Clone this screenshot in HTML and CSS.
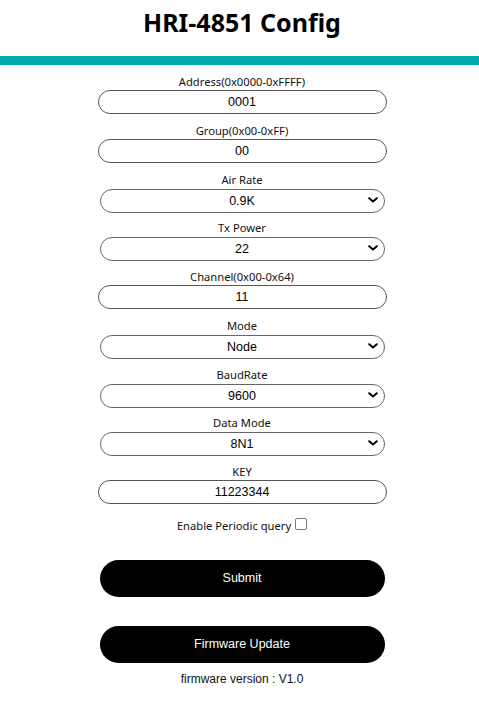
FILE: index.html
```html
<!DOCTYPE html>
<html>
<head>
<meta charset="utf-8">
<title>HRI-4851 Config</title>
<link rel="stylesheet" href="styles.css">
</head>
<body>
<header class="head">
  <h1 class="title">HRI-4851 Config</h1>
</header>
<div class="bar"></div>
<form class="form">
  <div class="field">
    <label class="label">Address(0x0000-0xFFFF)</label>
    <input class="text" type="text" value="0001">
  </div>
  <div class="field">
    <label class="label">Group(0x00-0xFF)</label>
    <input class="text" type="text" value="00">
  </div>
  <div class="field">
    <label class="label">Air Rate</label>
    <div class="selwrap">
      <select class="sel"><option>0.9K</option></select>
      <svg class="chev" width="10" height="6" viewBox="0 0 10 6"><path d="M1.2 1.2 L5 4.5 L8.8 1.2" fill="none" stroke="#000" stroke-width="2" stroke-linecap="round" stroke-linejoin="round"/></svg>
    </div>
  </div>
  <div class="field">
    <label class="label">Tx Power</label>
    <div class="selwrap">
      <select class="sel"><option>22</option></select>
      <svg class="chev" width="10" height="6" viewBox="0 0 10 6"><path d="M1.2 1.2 L5 4.5 L8.8 1.2" fill="none" stroke="#000" stroke-width="2" stroke-linecap="round" stroke-linejoin="round"/></svg>
    </div>
  </div>
  <div class="field">
    <label class="label">Channel(0x00-0x64)</label>
    <input class="text" type="text" value="11">
  </div>
  <div class="field">
    <label class="label">Mode</label>
    <div class="selwrap">
      <select class="sel"><option>Node</option></select>
      <svg class="chev" width="10" height="6" viewBox="0 0 10 6"><path d="M1.2 1.2 L5 4.5 L8.8 1.2" fill="none" stroke="#000" stroke-width="2" stroke-linecap="round" stroke-linejoin="round"/></svg>
    </div>
  </div>
  <div class="field">
    <label class="label">BaudRate</label>
    <div class="selwrap">
      <select class="sel"><option>9600</option></select>
      <svg class="chev" width="10" height="6" viewBox="0 0 10 6"><path d="M1.2 1.2 L5 4.5 L8.8 1.2" fill="none" stroke="#000" stroke-width="2" stroke-linecap="round" stroke-linejoin="round"/></svg>
    </div>
  </div>
  <div class="field">
    <label class="label">Data Mode</label>
    <div class="selwrap">
      <select class="sel"><option>8N1</option></select>
      <svg class="chev" width="10" height="6" viewBox="0 0 10 6"><path d="M1.2 1.2 L5 4.5 L8.8 1.2" fill="none" stroke="#000" stroke-width="2" stroke-linecap="round" stroke-linejoin="round"/></svg>
    </div>
  </div>
  <div class="field">
    <label class="label">KEY</label>
    <input class="text" type="text" value="11223344">
  </div>
  <div class="check">
    <span class="checklabel">Enable Periodic query</span>
    <span class="box"></span>
  </div>
  <button class="btn btn-submit" type="button">Submit</button>
  <button class="btn btn-fw" type="button">Firmware Update</button>
  <div class="version">firmware version : V1.0</div>
</form>
</body>
</html>
```
FILE: styles.css
```css
html, body {
  margin: 0;
  padding: 0;
  background: #fff;
}
body {
  width: 479px;
  font-family: "Noto Sans", "Open Sans", sans-serif;
  color: #000;
}
.head {
  box-sizing: border-box;
  height: 56px;
  padding: 0 0 12px 5px;
  display: flex;
  align-items: center;
  justify-content: center;
}
.title {
  margin: 0;
  font-family: "Noto Sans", sans-serif;
  font-weight: 700;
  font-size: 25px;
  line-height: 30px;
  color: #000;
}
.bar {
  height: 9px;
  background: #00abab;
}
.form {
  display: flex;
  flex-direction: column;
  align-items: center;
  padding-top: 9px;
  padding-left: 5px;
}
.field {
  display: flex;
  flex-direction: column;
  align-items: center;
  margin-bottom: 8.75px;
}
.label {
  font-size: 11.2px;
  line-height: 16px;
  height: 16px;
  color: #111;
}
.text {
  box-sizing: border-box;
  width: 289px;
  height: 24px;
  margin: 0;
  border: 1px solid #555;
  border-radius: 12px;
  padding: 0 10px;
  text-align: center;
  font-family: "Liberation Sans", Arial, sans-serif;
  font-size: 12.5px;
  color: #000;
  background: #fff;
  outline: none;
}
.selwrap {
  position: relative;
  width: 285px;
  height: 24px;
}
.sel {
  box-sizing: border-box;
  width: 285px;
  height: 24px;
  margin: 0;
  border: 1px solid #666;
  border-radius: 12px;
  padding: 0 20px;
  -webkit-appearance: none;
  appearance: none;
  text-align: center;
  text-align-last: center;
  font-family: "Liberation Sans", Arial, sans-serif;
  font-size: 12.5px;
  color: #000;
  background: #fff;
}
.chev {
  position: absolute;
  right: 7px;
  top: 9px;
  pointer-events: none;
}
.check {
  display: flex;
  align-items: center;
  gap: 4px;
  margin-top: 4px;
  height: 18px;
}
.checklabel {
  font-size: 11.2px;
  line-height: 16px;
  color: #111;
}
.box {
  box-sizing: border-box;
  width: 12px;
  height: 12px;
  border: 1px solid #767676;
  border-radius: 2px;
  margin-top: -4px;
}
.btn {
  box-sizing: border-box;
  width: 285px;
  height: 37px;
  border: none;
  border-radius: 18.5px;
  background: #000;
  color: #fff;
  font-family: "Liberation Sans", Arial, sans-serif;
  font-size: 12.5px;
  padding: 0;
}
.btn-submit {
  margin-top: 25px;
}
.btn-fw {
  margin-top: 29px;
}
.version {
  margin-top: 8px;
  font-family: "Liberation Sans", Arial, sans-serif;
  font-size: 12px;
  line-height: 16px;
  color: #111;
}
```
